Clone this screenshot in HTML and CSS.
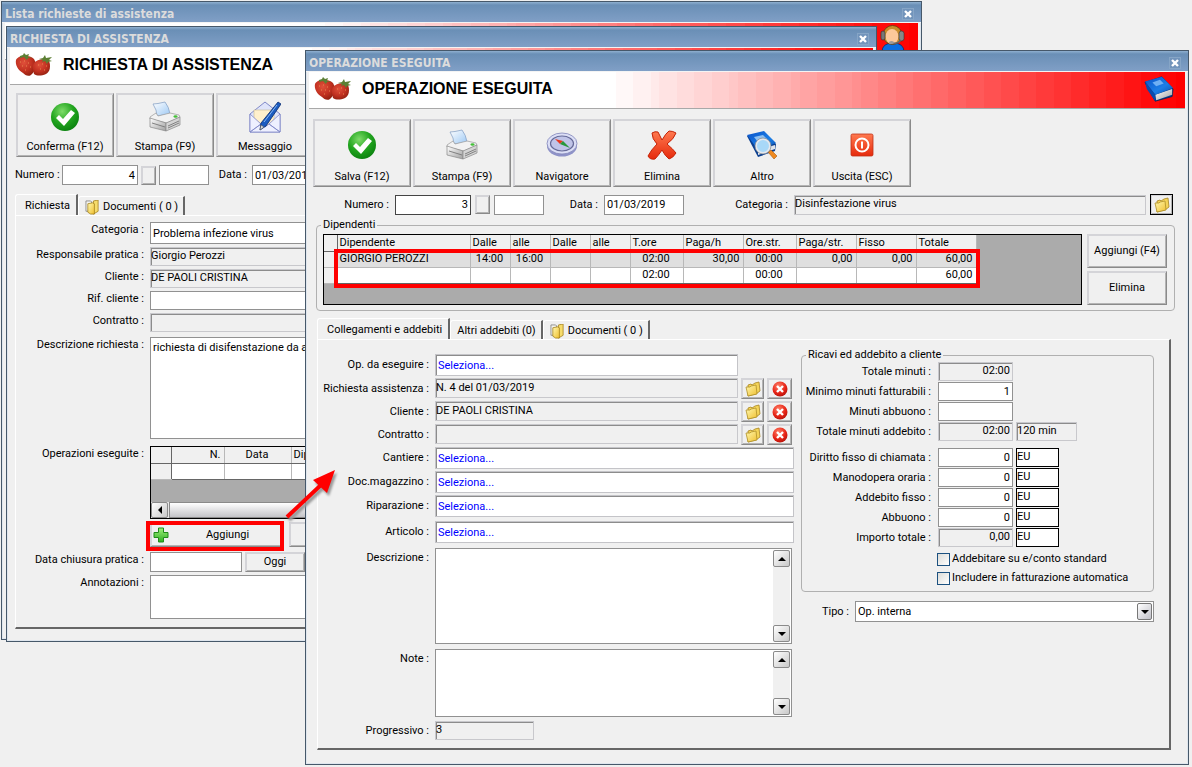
FILE: index.html
```html
<!DOCTYPE html>
<html lang="it">
<head>
<meta charset="utf-8">
<title>Operazione eseguita</title>
<link rel="stylesheet" href="styles.css">
</head>
<body>
<svg class="defs" aria-hidden="true">
  <defs>
    <radialGradient id="gGreen" cx=".4" cy=".3" r=".8"><stop offset="0" stop-color="#7fdc6a"/><stop offset=".5" stop-color="#22a51f"/><stop offset="1" stop-color="#067a0c"/></radialGradient>
    <radialGradient id="gBerry" cx=".4" cy=".35" r=".7"><stop offset="0" stop-color="#e0503a"/><stop offset=".6" stop-color="#c03020"/><stop offset="1" stop-color="#90200f"/></radialGradient>
    <linearGradient id="gRed" x1="0" y1="0" x2="0" y2="1"><stop offset="0" stop-color="#ff7a50"/><stop offset="1" stop-color="#e62a0c"/></linearGradient>
    <radialGradient id="gStop" cx=".4" cy=".3" r=".8"><stop offset="0" stop-color="#ff8068"/><stop offset=".6" stop-color="#e62214"/><stop offset="1" stop-color="#a81008"/></radialGradient>
    <linearGradient id="gFold" x1="0" y1="0" x2="1" y2="1"><stop offset="0" stop-color="#fff8b0"/><stop offset="1" stop-color="#f0c030"/></linearGradient>
    <linearGradient id="gBlue" x1="0" y1="0" x2="1" y2="1"><stop offset="0" stop-color="#0a52c8"/><stop offset=".6" stop-color="#1c7ee6"/><stop offset="1" stop-color="#0a4fb0"/></linearGradient>
    <linearGradient id="gPaper" x1="0" y1="0" x2="1" y2="1"><stop offset="0" stop-color="#fff"/><stop offset="1" stop-color="#9cc8f4"/></linearGradient>
    <linearGradient id="gGrey" x1="0" y1="0" x2="1" y2="1"><stop offset="0" stop-color="#fff"/><stop offset="1" stop-color="#a0a0a0"/></linearGradient>
    <linearGradient id="gPlus" x1="0" y1="0" x2="0" y2="1"><stop offset="0" stop-color="#9df07a"/><stop offset="1" stop-color="#2fae22"/></linearGradient>
  </defs>
  <symbol id="berries" viewBox="0 0 38 26">
    <path d="M1 8C3 3 14 2 19 7c3 5 2 12-3 16-3 2-6 0-8-2C3 18 0 13 1 8z" fill="url(#gBerry)"/>
    <path d="M19 11c3-4 11-5 15-2 2 5 1 11-3 13-5 2-9 2-12 0-1-4-2-8 0-11z" fill="url(#gBerry)"/>
    <path d="M5 4l3-1 1-2 2 2 3-1-1 3 4 1-4 0-1 2-3-3-4 1zM24 7l4-1 2-3 1 3 6-1-3 3 3 1-4 1-1 2-2-3-3 1 1-2z" fill="#5c7f34"/>
    <path d="M5 10h1M9 9h1M13 11h1M7 14h1M11 14h1M15 15h1M10 18h1M23 13h1M27 12h1M31 14h1M25 17h1M29 18h1" stroke="#e88850" stroke-width="1"/>
  </symbol>
  <symbol id="check" viewBox="0 0 32 32">
    <circle cx="16" cy="16" r="14" fill="url(#gGreen)"/>
    <path d="M7 17l3-3 4 4 8-9 4 3-11 13z" fill="#fff"/>
  </symbol>
  <symbol id="printer" viewBox="0 0 32 32">
    <path d="M4 3q4 0 12-2 4 5 5 12l-13 2q0-6-4-12z" fill="url(#gPaper)" stroke="#8aa4c8" stroke-width=".8"/>
    <path d="M1 16l6-4 2 3 12-3 9 2 1 2-13 6-17-4z" fill="#f2f2f2" stroke="#999" stroke-width=".7"/>
    <path d="M1 17l16 5v8L1 26z" fill="url(#gGrey)" stroke="#888" stroke-width=".7"/>
    <path d="M17 22l14-6v8l-14 6z" fill="#d4d4d4" stroke="#888" stroke-width=".7"/>
    <path d="M3 22l13 4M19 25l11-5M19 27l11-5" stroke="#777" stroke-width=".9" fill="none"/>
    <ellipse cx="26.500" cy="15.500" rx="2" ry="1.200" fill="#44c038"/>
  </symbol>
  <symbol id="mail" viewBox="0 0 32 32">
    <path d="M1 13L16 1l15 12v18H1z" fill="#dfe4fa" stroke="#8088c8"/>
    <path d="M5 9h20v11l-9 6-11-8z" fill="#fff0cc" stroke="#c8b890" stroke-width=".6"/>
    <path d="M1 13l11 10L1 31zM31 13L20 23l11 8zM1 31l11-8 4 3 4-3 11 8z" fill="#eef0ff" stroke="#8088c8" stroke-width=".8"/>
    <path d="M29 1l3 2-15 22-6 4 1-7z" fill="#1c5cc0" stroke="#0a2c70" stroke-width=".8"/>
    <path d="M28 4L15 21" stroke="#88b8f4" stroke-width="1"/>
    <path d="M11 29l1-5 3 2z" fill="#ddd" stroke="#444" stroke-width=".5"/>
  </symbol>
  <symbol id="compass" viewBox="0 0 32 32">
    <ellipse cx="16" cy="17" rx="15" ry="10.500" fill="#8e92c8"/>
    <ellipse cx="16" cy="14.500" rx="15" ry="10.500" fill="#dcdff6" stroke="#8084b8" stroke-width=".8"/>
    <ellipse cx="16" cy="14.500" rx="11.500" ry="7.500" fill="#c0c4e8" stroke="#666a98" stroke-width="1.200"/>
    <path d="M9 10l8 2-3 3z" fill="#e83820"/>
    <path d="M17 12l7 7-10-4z" fill="#28983c"/>
  </symbol>
  <symbol id="cross" viewBox="0 0 32 32">
    <path d="M6 4q3-2 6-1l4 8q4-7 7-9 4 0 7 2-2 6-9 11 6 5 9 9-3 5-7 6-4-3-7-9-4 6-7 9-5 1-7-3 3-6 9-12-5-5-5-11z" fill="url(#gRed)" stroke="#c42408" stroke-width="1"/>
  </symbol>
  <symbol id="book" viewBox="0 0 32 32">
    <path d="M1 9L19 3l12 13-1 8-18 5z" fill="#0a3f90" stroke="#062450" stroke-width=".8"/>
    <path d="M12 22l18-6v6l-17 6z" fill="url(#gGrey)"/>
    <path d="M1 8L19 3l12 12-19 7z" fill="url(#gBlue)"/>
    <path d="M1 8l11 14v7L3 16z" fill="#0b4aac"/>
    <path d="M9 9l8-3 4 4-8 3z" fill="#6fb0f4"/>
  </symbol>
  <symbol id="booksearch" viewBox="0 0 32 32">
    <path d="M1 7L18 3l12 12-1 7-17 6z" fill="#0a3f90"/>
    <path d="M12 21l17-5v4l-17 6z" fill="#e0e4ea"/>
    <path d="M1 6L18 2l12 12-18 7z" fill="url(#gBlue)"/>
    <path d="M8 8l9-2 7 7-9 4z" fill="#8fc0f0"/>
    <path d="M22 23l3-2 6 6-3 3z" fill="#f08a20" stroke="#a85a10" stroke-width=".6"/>
    <circle cx="17" cy="17" r="7" fill="#a8d8f8" stroke="#e4e8ee" stroke-width="2"/>
    <circle cx="17" cy="17" r="8" fill="none" stroke="#7a828c" stroke-width=".7"/>
  </symbol>
  <symbol id="power" viewBox="0 0 32 32">
    <rect x="5" y="5" width="22" height="22" rx="1.500" fill="url(#gRed)" stroke="#c03018" stroke-width=".8"/>
    <circle cx="16" cy="16" r="6.500" fill="none" stroke="#fff" stroke-width="2"/>
    <path d="M16 12.500v7" stroke="#fff" stroke-width="2"/>
  </symbol>
  <symbol id="folder" viewBox="0 0 16 16">
    <path d="M3 4l3-1 1 1 3-2 4-1 1 9-4 3-8 2z" fill="#f4d458" stroke="#a88420" stroke-width=".8"/>
    <path d="M1 6l4 0 1-1 5-1 1 9-9 2z" fill="url(#gFold)" stroke="#b09028" stroke-width=".8"/>
  </symbol>
  <symbol id="docs" viewBox="0 0 16 16">
    <path d="M1 1h5l1 1v10H1z" fill="#f4f4f0" stroke="#777" stroke-width=".8"/>
    <path d="M9 1l5-1v12l-5 3z" fill="#f6dc6c" stroke="#a07c14" stroke-width=".8"/>
    <path d="M3 4l5-1 2 1v11l-4 0-3-2z" fill="url(#gFold)" stroke="#a07c14" stroke-width=".8"/>
  </symbol>
  <symbol id="stop" viewBox="0 0 16 16">
    <circle cx="8" cy="8" r="7.500" fill="url(#gStop)"/>
    <path d="M5 5l6 6M11 5l-6 6" stroke="#fff" stroke-width="2.400"/>
  </symbol>
  <symbol id="plus" viewBox="0 0 16 16">
    <path d="M5.500 1h5v4.500H15v5h-4.500V15h-5v-4.500H1v-5h4.500z" fill="url(#gPlus)" stroke="#1f8a1a"/>
  </symbol>
  <symbol id="x" viewBox="0 0 10 10">
    <path d="M2 2l6 6M8 2l-6 6" stroke="#fff" stroke-width="2.400"/>
  </symbol>
  <symbol id="operator" viewBox="0 0 26 28">
    <path d="M2 28q0-9 11-9t11 9z" fill="#0a6ee0" stroke="#06306c" stroke-width=".8"/>
    <circle cx="12.500" cy="11" r="9.500" fill="#c88c2a" stroke="#5c3c10" stroke-width=".8"/>
    <ellipse cx="12" cy="12.500" rx="6.500" ry="7.500" fill="#fcc89a"/>
    <rect x="1" y="7" width="4" height="9" rx="2" fill="#777" stroke="#333" stroke-width=".6"/>
    <rect x="19" y="7" width="5" height="10" rx="2.500" fill="#888" stroke="#333" stroke-width=".6"/>
    <path d="M21 16q-3 4-9 3" stroke="#666" stroke-width="1.500" fill="none"/>
    <ellipse cx="11.500" cy="18.500" rx="2.500" ry="1.600" fill="#999"/>
  </symbol>
</svg>

<main class="desktop">
  <section class="win win-list" aria-label="Lista richieste di assistenza">
    <header class="titlebar"><span>Lista richieste di assistenza</span><button class="close" aria-label="Chiudi"><svg><use href="#x"/></svg></button></header>
    <div class="band"><svg class="operator"><use href="#operator"/></svg></div>
  </section>

  <section class="win win-request" aria-label="Richiesta di assistenza">
    <header class="titlebar"><span>RICHIESTA DI ASSISTENZA</span><button class="close" aria-label="Chiudi"><svg><use href="#x"/></svg></button></header>
    <div class="band"><svg class="berries"><use href="#berries"/></svg><h1>RICHIESTA DI ASSISTENZA</h1></div>
    <div class="body">
      <div class="toolbar">
        <button class="tool"><svg><use href="#check"/></svg>Conferma (F12)</button>
        <button class="tool"><svg><use href="#printer"/></svg>Stampa (F9)</button>
        <button class="tool"><svg><use href="#mail"/></svg>Messaggio</button>
      </div>
      <div class="docrow">
        <label class="first" for="r-num">Numero :</label><input id="r-num" class="w76 num" value="4">
        <button class="raised tiny" aria-label="Cerca numero"></button><input class="w50" aria-label="Serie">
        <label class="data" for="r-data">Data :</label><input id="r-data" class="w80" value="01/03/2019">
      </div>
      <nav class="tabs"><button class="tab on">Richiesta</button><button class="tab"><svg><use href="#docs"/></svg>Documenti ( 0 )</button></nav>
      <div class="panel">
        <div class="reqform">
          <label for="q1">Categoria :</label><input id="q1" class="tall" value="Problema infezione virus">
          <label for="q2">Responsabile pratica :</label><input id="q2" class="ro" readonly value="Giorgio Perozzi">
          <label for="q3">Cliente :</label><input id="q3" class="ro" readonly value="DE PAOLI CRISTINA">
          <label for="q4">Rif. cliente :</label><input id="q4">
          <label for="q5">Contratto :</label><input id="q5" class="ro" readonly>
          <label class="sp2" for="q6">Descrizione richiesta :</label><textarea id="q6" class="h102 sp2">richiesta di disifenstazione da attuare</textarea>
          <span class="lbl sp4">Operazioni eseguite :</span>
          <div class="gridbox opsbox sp4">
            <table class="grid ops">
              <colgroup><col class="c20"><col class="c53"><col class="c67"><col></colgroup>
              <thead><tr><th></th><th class="r">N.</th><th class="c">Data</th><th>Dipendente</th></tr></thead>
              <tbody><tr><th></th><td></td><td></td><td></td></tr></tbody>
            </table>
            <div class="hscroll"><button class="arrow" aria-label="Scorri a sinistra"><i class="tri left"></i></button><span class="thumb"></span></div>
          </div>
          <div class="actions"><button class="raised add"><svg><use href="#plus"/></svg><span>Aggiungi</span></button><button class="raised del">Elimina</button></div>
          <label for="q7">Data chiusura pratica :</label>
          <div class="daterow"><input id="q7"><button class="raised">Oggi</button></div>
          <label for="q8">Annotazioni :</label><textarea id="q8" class="h44"></textarea>
        </div>
      </div>
    </div>
  </section>

  <section class="win win-op" aria-label="Operazione eseguita">
    <header class="titlebar"><span>OPERAZIONE ESEGUITA</span><button class="close" aria-label="Chiudi"><svg><use href="#x"/></svg></button></header>
    <div class="band"><svg class="berries"><use href="#berries"/></svg><h1>OPERAZIONE ESEGUITA</h1><svg class="bookicon"><use href="#book"/></svg></div>
    <div class="body">
      <div class="toolbar">
        <button class="tool"><svg><use href="#check"/></svg>Salva (F12)</button>
        <button class="tool"><svg><use href="#printer"/></svg>Stampa (F9)</button>
        <button class="tool"><svg><use href="#compass"/></svg>Navigatore</button>
        <button class="tool"><svg><use href="#cross"/></svg>Elimina</button>
        <button class="tool"><svg><use href="#booksearch"/></svg>Altro</button>
        <button class="tool"><svg><use href="#power"/></svg>Uscita (ESC)</button>
      </div>
      <div class="docrow">
        <label class="first" for="o-num">Numero :</label><input id="o-num" class="w76 num focus" value="3">
        <button class="raised tiny" aria-label="Cerca numero"></button><input class="w50" aria-label="Serie">
        <label class="data" for="o-data">Data :</label><input id="o-data" class="w80" value="01/03/2019">
        <label class="cat" for="o-cat">Categoria :</label><input id="o-cat" class="ro grow" readonly value="Disinfestazione virus">
        <button class="iconbtn default" aria-label="Scegli categoria"><svg><use href="#folder"/></svg></button>
      </div>
      <fieldset class="staff">
        <legend>Dipendenti</legend>
        <div class="gridbox staffbox">
          <table class="grid">
            <colgroup><col class="c13"><col class="c133"><col class="c40"><col class="c40"><col class="c40"><col class="c40"><col class="c53"><col class="c60"><col class="c53"><col class="c60"><col class="c60"><col class="c60"></colgroup>
            <thead><tr><th></th><th>Dipendente</th><th>Dalle</th><th>alle</th><th>Dalle</th><th>alle</th><th>T.ore</th><th>Paga/h</th><th>Ore.str.</th><th>Paga/str.</th><th>Fisso</th><th>Totale</th></tr></thead>
            <tbody>
              <tr class="sel"><th></th><td>GIORGIO PEROZZI</td><td class="c">14:00</td><td class="c">16:00</td><td></td><td></td><td class="c">02:00</td><td class="r">30,00</td><td class="c">00:00</td><td class="r">0,00</td><td class="r">0,00</td><td class="r">60,00</td></tr>
              <tr><th></th><td></td><td></td><td></td><td></td><td></td><td class="c">02:00</td><td></td><td class="c">00:00</td><td></td><td></td><td class="r">60,00</td></tr>
            </tbody>
          </table>
          <span class="mark mark-rows"></span>
        </div>
        <div class="side"><button class="raised">Aggiungi (F4)</button><button class="raised">Elimina</button></div>
      </fieldset>
      <nav class="tabs"><button class="tab on">Collegamenti e addebiti</button><button class="tab">Altri addebiti (0)</button><button class="tab"><svg><use href="#docs"/></svg>Documenti ( 0 )</button></nav>
      <div class="panel split">
        <div class="opform">
          <label for="f1">Op. da eseguire :</label><div class="short"><input id="f1" class="sunk" value="Seleziona..."></div>
          <label for="f2">Richiesta assistenza :</label>
          <div class="pick"><input id="f2" class="ro" readonly value="N. 4 del 01/03/2019"><button class="iconbtn" aria-label="Apri"><svg><use href="#folder"/></svg></button><button class="iconbtn" aria-label="Rimuovi"><svg><use href="#stop"/></svg></button></div>
          <label for="f3">Cliente :</label>
          <div class="pick"><input id="f3" class="ro" readonly value="DE PAOLI CRISTINA"><button class="iconbtn" aria-label="Apri"><svg><use href="#folder"/></svg></button><button class="iconbtn" aria-label="Rimuovi"><svg><use href="#stop"/></svg></button></div>
          <label for="f4">Contratto :</label>
          <div class="pick"><input id="f4" class="ro" readonly><button class="iconbtn" aria-label="Apri"><svg><use href="#folder"/></svg></button><button class="iconbtn" aria-label="Rimuovi"><svg><use href="#stop"/></svg></button></div>
          <label for="f5">Cantiere :</label><input id="f5" class="sunk" value="Seleziona...">
          <label for="f6">Doc.magazzino :</label><input id="f6" class="sunk" value="Seleziona...">
          <label for="f7">Riparazione :</label><input id="f7" class="sunk" value="Seleziona...">
          <label class="sp2" for="f8">Articolo :</label><input id="f8" class="sunk sp2" value="Seleziona...">
          <label class="top sp4" for="f9">Descrizione :</label>
          <div class="memo memo-desc sp4"><textarea id="f9"></textarea><div class="vscroll"><button class="arrow" aria-label="Su"><i class="tri up"></i></button><button class="arrow" aria-label="Giù"><i class="tri down"></i></button></div></div>
          <label class="top sp4" for="f10">Note :</label>
          <div class="memo memo-note sp4"><textarea id="f10"></textarea><div class="vscroll"><button class="arrow" aria-label="Su"><i class="tri up"></i></button><button class="arrow" aria-label="Giù"><i class="tri down"></i></button></div></div>
          <label class="sp2" for="f11">Progressivo :</label><input id="f11" class="ro w99 sp2" readonly value="3">
        </div>
        <div class="rightcol">
          <fieldset class="money">
            <legend>Ricavi ed addebito a cliente</legend>
            <div class="mgrid">
              <label for="m1">Totale minuti :</label><input id="m1" class="ro num" readonly value="02:00"><span></span>
              <label for="m2">Minimo minuti fatturabili :</label><input id="m2" class="num" value="1"><span></span>
              <label for="m3">Minuti abbuono :</label><input id="m3" class="num"><span></span>
              <label for="m4">Totale minuti addebito :</label><input id="m4" class="ro num" readonly value="02:00"><input class="ro w61" readonly value="120 min" aria-label="Minuti">
            </div>
            <div class="mgrid">
              <label for="m5">Diritto fisso di chiamata :</label><input id="m5" class="num" value="0"><input class="cur" value="EU" aria-label="Valuta">
              <label for="m6">Manodopera oraria :</label><input id="m6" class="num" value="0"><input class="cur" value="EU" aria-label="Valuta">
              <label for="m7">Addebito fisso :</label><input id="m7" class="num" value="0"><input class="cur" value="EU" aria-label="Valuta">
              <label for="m8">Abbuono :</label><input id="m8" class="num" value="0"><input class="cur" value="EU" aria-label="Valuta">
              <label for="m9">Importo totale :</label><input id="m9" class="ro num" readonly value="0,00"><input class="cur" value="EU" aria-label="Valuta">
            </div>
            <div class="checks">
              <label><input type="checkbox">Addebitare su e/conto standard</label>
              <label><input type="checkbox">Includere in fatturazione automatica</label>
            </div>
          </fieldset>
          <div class="kind">
            <label for="tipo">Tipo :</label>
            <div class="selwrap"><select id="tipo"><option>Op. interna</option></select><span class="drop"><i class="tri down"></i></span></div>
          </div>
        </div>
      </div>
    </div>
  </section>

  <span class="mark mark-add"></span>
  <svg class="pointer" viewBox="0 0 60 60" aria-hidden="true">
    <path d="M5 49L40 16" stroke="#f00" stroke-width="4"/>
    <path d="M53 2L31 12 45 25z" fill="#f00"/>
  </svg>
</main>
</body>
</html>
```
FILE: styles.css
```css
* { box-sizing: border-box; }
body {
  margin: 0;
  background: #f0f0f0;
  color: #000;
  font: 11px/14px Roboto, "DejaVu Sans Condensed", sans-serif;
}
button, input, textarea, select { font: inherit; color: inherit; margin: 0; border-radius: 0; }
button { padding: 0; background: #f0f0f0; }
svg { display: block; flex: none; }
.defs { position: absolute; width: 0; height: 0; }
.desktop { position: relative; min-height: 100vh; overflow: hidden; }

/* windows */
.win {
  position: absolute;
  border: 1px solid #46586a;
  background: #f0f0f0;
  box-shadow: inset 1px 0 #dfe6ee, inset -1px -1px #dfe6ee;
}
.win-list { left: 1px; right: 270px; top: 1px; height: 639px; }
.win-request { left: 6px; right: 315px; top: 26px; }
.win-op { left: 305px; right: 3px; top: 50px; }
.titlebar {
  display: flex;
  align-items: center;
  justify-content: space-between;
  height: 21px;
  padding: 3px 7px 0 3px;
  background: linear-gradient(#8fb0d0, #6a8fb6 3px, #809fc6);
  border-bottom: 1px solid #f4f4f4;
  color: #dcdcdc;
  font: bold 12px/14px "DejaVu Sans Condensed", sans-serif;
}
.close {
  display: grid;
  place-items: center;
  width: 12px;
  height: 12px;
  border: 1px solid #86a5c6;
  background: #7294bb;
}
.close svg { width: 10px; height: 10px; }
.band {
  display: flex;
  align-items: center;
  height: 37px;
  margin: 0 3px;
  padding: 0 10px 3px 5px;
  border-bottom: 1px solid #a8a8a8;
  background: linear-gradient(to right, #fff 0 35%,
    #fff8f8 0 37%, #fff1f1 0 39%, #ffeaea 0 40%, #ffe3e3 0 42%, #ffdcdc 0 44%,
    #ffd5d5 0 46%, #ffcece 0 48%, #ffc7c7 0 49%, #ffc0c0 0 51%, #ffb9b9 0 53%,
    #ffb2b2 0 55%, #ffabab 0 56%, #ffa4a4 0 58%, #ff9d9d 0 60%, #ff9696 0 62%,
    #ff8f8f 0 63%, #ff8888 0 65%, #ff8080 0 67%, #ff7878 0 69%, #ff7070 0 71%,
    #ff6969 0 73%, #ff6161 0 75%, #ff5959 0 77%, #ff5151 0 79%, #ff4a4a 0 81%,
    #ff4242 0 83%, #ff3a3a 0 85%, #ff3333 0 87%, #ff2b2b 0 89%, #ff2323 0 91%,
    #ff1c1c 0 93%, #ff1414 0 95%, #ff0c0c 0 97%, #ff0505 0 99%, #f00 0);
}
.band h1 { margin: 0 auto 0 10px; font: bold 16px/20px "Liberation Sans", Arial, sans-serif; }
.berries { width: 38px; height: 26px; }
.bookicon { width: 32px; height: 30px; }
.operator { width: 26px; height: 28px; margin: 1px 2px 0 auto; align-self: flex-start; }

/* fields */
label, .lbl { white-space: nowrap; }
input, textarea {
  display: block;
  min-width: 0;
  height: 19px;
  padding: 0 2px;
  border: 1px solid #919191;
  background: #fff;
  outline: 0;
}
textarea { width: 100%; resize: none; padding: 3px 2px; overflow: hidden; }
.ro {
  padding: 0 0 2px;
  border: 1px solid #c8c8cc;
  background: #f0f0f0;
  box-shadow: inset 1px 1px #8c8c8c;
}
.sunk {
  height: 22px;
  border: 1px solid #c4c4c8;
  box-shadow: inset 1px 1px #8c8c8c;
  color: #00f;
}
.num { text-align: right; }
.ro.num { padding-right: 2px; }
.focus { border-color: #444; }
.w50 { width: 50px; }
.w61 { width: 61px; }
.w76 { width: 76px; }
.w80 { width: 80px; }
.w99 { width: 99px; }

/* buttons */
.raised, .tool, .iconbtn {
  border: 1px solid;
  border-color: #d4d4d8 #8a8a8a #8a8a8a #d4d4d8;
  box-shadow: inset 1px 1px #d4d4d8, inset -1px -1px #b4b4b4;
}
.tool {
  display: flex;
  flex-direction: column;
  align-items: center;
  justify-content: space-between;
  width: 98px;
  height: 68px;
  padding: 9px 0 2px;
}
.tool svg { width: 32px; height: 32px; }
.tiny { width: 15px; height: 19px; }
.iconbtn { display: grid; place-items: center; width: 23px; height: 21px; }
.iconbtn svg { width: 16px; height: 16px; }
.default { border-color: #000; }

.toolbar { display: flex; gap: 2px; }
.docrow { display: flex; align-items: center; gap: 4px; }
.docrow input { height: 20px; }
.docrow label { padding-right: 2px; text-align: right; }

/* tabs */
.tabs { display: flex; align-items: flex-end; }
.tab {
  display: flex;
  align-items: center;
  gap: 3px;
  height: 19px;
  padding: 2px 5px 0 6px;
  border: solid;
  border-width: 1px 2px 0 1px;
  border-color: #fff #666 #fff #fff;
  border-radius: 3px 0 0 0;
}
.tab.on { height: 21px; padding: 2px 6px 0 9px; }
.tab svg { width: 15px; height: 15px; }
.panel {
  border: solid;
  border-width: 1px 2px 2px 1px;
  border-color: #fff #666 #666 #fff;
}

/* data grids */
.gridbox { position: relative; border: 1px solid #000; background: #ababab; }
.grid { table-layout: fixed; border-collapse: collapse; }
.grid th, .grid td {
  height: 16px;
  padding: 0 3px 0 2px;
  border-right: 1px solid #b8b8b8;
  border-bottom: 1px solid #b8b8b8;
  background: #fff;
  font-weight: normal;
  line-height: 14px;
  text-align: left;
  overflow: hidden;
  white-space: nowrap;
}
.grid th { background: #f0f0f0; }
.grid thead th { border-bottom-color: #666; }
.grid th:first-child { border-right-color: #666; }
.grid tr:last-child > td { border-bottom-color: #666; }
.grid .sel td { background: #dfdfdf; }
.grid .r { text-align: right; }
.grid .c { text-align: center; }
.c13 { width: 13px; }
.c20 { width: 20px; }
.c40 { width: 40px; }
.c53 { width: 53px; }
.c60 { width: 60px; }
.c67 { width: 67px; }
.c133 { width: 133px; }

.arrow {
  display: grid;
  place-items: center;
  width: 17px;
  height: 17px;
  border: 1px solid #8a8a8a;
  border-radius: 2px;
  background: linear-gradient(135deg, #fff, #c8c8c8);
}
.tri { border: 4px solid transparent; }
.tri.up { border-top: 0; border-bottom-color: #000; }
.tri.down { border-bottom: 0; border-top-color: #000; }
.tri.left { border-left: 0; border-right-color: #000; }

/* request window */
.win-request .body { padding: 8px 8px 12px 8px; }
.win-request .toolbar { padding-left: 1px; }
.win-request .tool { height: 64px; padding: 7px 0 2px; }
.win-request .docrow { margin-top: 8px; gap: 3px; }
.win-request .first { width: 44px; }
.win-request .data { width: 37px; }
.win-request .tabs { margin-top: 9px; }
.reqform {
  display: grid;
  grid-template-columns: 128px 1fr;
  column-gap: 6px;
  row-gap: 3px;
  padding: 6px 8px 8px 0;
}
.reqform label, .reqform .lbl { text-align: right; padding-top: 1px; }
.reqform input { width: 100%; }
.reqform .tall { height: 22px; }
.reqform .h102 { height: 102px; }
.reqform .h44 { height: 44px; }
.reqform .sp2 { margin-top: 2px; }
.reqform .sp4 { margin-top: 4px; }
.opsbox { display: flex; flex-direction: column; justify-content: space-between; height: 73px; }
.ops { width: 100%; }
.hscroll { display: flex; gap: 1px; background: #e4e4e4; }
.hscroll .arrow { height: 16px; }
.thumb { flex: 1; border: 1px solid #8a8a8a; background: linear-gradient(#fff, #c4c4c8); }
.actions { grid-column: 2; display: flex; gap: 6px; height: 25px; margin-bottom: 2px; }
.actions .add { display: flex; align-items: center; width: 133px; }
.add svg { width: 16px; height: 16px; margin-left: 2px; }
.add span { flex: 1; padding-left: 4px; }
.actions .del { width: 133px; }
.daterow { display: flex; gap: 3px; }
.daterow input { width: 92px; height: 20px; }
.daterow .raised { width: 60px; }

/* operation window */
.win-op .body { padding: 10px 13px 14px 7px; }
.win-op .docrow { margin: 7px 2px 0 0; }
.win-op .first { width: 78px; }
.win-op .data { width: 52px; }
.win-op .cat { width: 102px; }
.grow { flex: 1; }
fieldset { min-width: 0; margin: 0; border: 1px solid #b0b0b0; border-radius: 4px; }
legend { padding: 0 2px; margin-left: 4px; }
.staff { display: flex; gap: 5px; margin: 3px 0 0 3px; padding: 2px 7px 5px 6px; }
.staff legend { margin-left: -2px; }
.staffbox { flex: 1; height: 71px; }
.side { display: flex; flex-direction: column; gap: 3px; width: 80px; }
.side .raised { flex: 1; }
.win-op .tabs { margin: 7px 0 0 4px; }
.win-op .panel { margin: 0 4px; }
.split { display: flex; gap: 7px; padding: 14px 15px 8px 0; }
.opform {
  flex: 1;
  display: grid;
  grid-template-columns: 111px 1fr;
  column-gap: 6px;
  row-gap: 2px;
  align-items: center;
}
.opform label { text-align: right; }
.opform .top { align-self: start; padding-top: 3px; }
.opform .sp2 { margin-top: 2px; }
.opform .sp4 { margin-top: 3px; }
.short { padding-right: 56px; }
.short input { width: 100%; }
.pick { display: flex; gap: 3px; padding-right: 2px; }
.pick input { flex: 1; height: 20px; }
.pick .iconbtn:last-child { width: 25px; }
.memo { display: flex; margin-right: 2px; padding: 1px; border: 1px solid #919191; background: #fff; }
.memo textarea { flex: 1; height: auto; border: 0; }
.memo-desc { height: 96px; }
.memo-note { height: 68px; }
.vscroll { display: flex; flex-direction: column; justify-content: space-between; background: #f0f0f0; }
.rightcol { flex: 0 1 353px; }
.money { margin-top: -6px; padding: 0 0 6px; }
.mgrid { display: grid; grid-template-columns: 133px 75px 61px; column-gap: 3px; row-gap: 1px; align-items: center; }
.mgrid label { padding-right: 4px; text-align: right; }
.mgrid + .mgrid { margin-top: 7px; }
.cur { width: 43px; border-color: #000; padding: 0 0 3px; }
.checks { display: grid; gap: 5px; margin: 5px 0 0 135px; }
.checks label { display: flex; align-items: center; gap: 2px; }
.checks input {
  appearance: none;
  width: 13px;
  height: 13px;
  border-color: #1c5180;
  background: linear-gradient(135deg, #dcdcd8, #fff);
}
.kind { display: flex; align-items: center; gap: 6px; margin-top: 9px; }
.kind label { width: 48px; text-align: right; }
.selwrap { position: relative; flex: 1; }
.selwrap select {
  appearance: none;
  display: block;
  width: 100%;
  height: 21px;
  padding: 0 20px 0 2px;
  border: 1px solid #919191;
  background: #fff;
}
.drop {
  position: absolute;
  right: 2px;
  top: 2px;
  display: grid;
  place-items: center;
  width: 15px;
  height: 17px;
  border: 1px solid #777;
  border-radius: 2px;
  background: linear-gradient(135deg, #fff, #c0c0c8);
  pointer-events: none;
}

/* highlights */
.mark { position: absolute; border: 4px solid #f00; pointer-events: none; }
.mark-rows { left: 10px; top: 14px; width: 646px; height: 39px; }
.mark-add { left: 146px; top: 521px; width: 138px; height: 30px; }
.pointer { position: absolute; left: 282px; top: 468px; width: 60px; height: 60px; filter: drop-shadow(2px 3px 1px #999); }
```
